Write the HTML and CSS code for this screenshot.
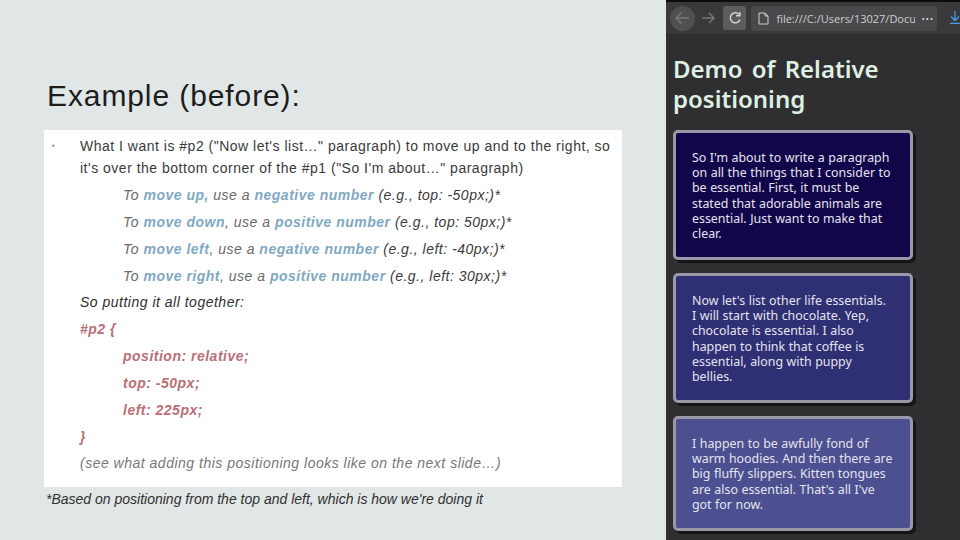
FILE: index.html
```html
<!DOCTYPE html>
<html lang="en">
<head>
<meta charset="utf-8">
<title>Example (before)</title>
<link rel="stylesheet" href="styles.css">
</head>
<body>
<main class="slide">
  <h1 class="title">Example (before):</h1>
  <section class="box">
    <div class="bullet-row">
      <span class="bullet">▪</span>
      <p class="lead">What I want is #p2 ("Now let's list…" paragraph) to move up and to the right, so it's over the bottom corner of the #p1 ("So I'm about…" paragraph)</p>
    </div>
    <div class="body">
      <p class="rule">To <b>move up,</b> use a <b>negative number</b> <span class="dark">(e.g., top: -50px;)*</span></p>
      <p class="rule">To <b>move down</b>, use a <b>positive number</b> <span class="dark">(e.g., top: 50px;)*</span></p>
      <p class="rule">To <b>move left</b>, use a <b>negative number</b> <span class="dark">(e.g., left: -40px;)*</span></p>
      <p class="rule">To <b>move right</b>, use a <b>positive number</b> <span class="dark">(e.g., left: 30px;)*</span></p>
      <p class="line plain">So putting it all together:</p>
      <p class="line code">#p2 {</p>
      <p class="rule code">position: relative;</p>
      <p class="rule code">top: -50px;</p>
      <p class="rule code">left: 225px;</p>
      <p class="line code">}</p>
      <p class="line see">(see what adding this positioning looks like on the next slide…)</p>
    </div>
  </section>
  <p class="foot">*Based on positioning from the top and left, which is how we're doing it</p>
</main>
<aside class="browser">
  <div class="tabstrip"></div>
  <div class="toolbar">
    <span class="nav back"><svg width="16" height="14" viewBox="0 0 16 14"><path d="M15 7H2M7.500 1.500 2 7l5.500 5.500" fill="none" stroke="#77777a" stroke-width="1.500"/></svg></span>
    <span class="nav fwd"><svg width="14" height="14" viewBox="0 0 14 14"><path d="M0 7h12M7 2l5 5-5 5" fill="none" stroke="#77777a" stroke-width="1.500"/></svg></span>
    <span class="nav reload"><svg width="14" height="14" viewBox="0 0 14 14"><path d="M12 8.500A5 5 0 1 1 11 3.500M11.800 1v3.800H8" fill="none" stroke="#d2d2d4" stroke-width="1.500"/></svg></span>
    <div class="url">
      <svg width="11" height="13" viewBox="0 0 11 13"><path d="M1 1h6l3 3v8H1zM7 1v3h3" fill="none" stroke="#cfcfd1" stroke-width="1"/></svg>
      <span class="url-text">file:///C:/Users/13027/Docu</span>
      <span class="dots">•••</span>
    </div>
    <svg class="download" width="10" height="14" viewBox="0 0 10 14"><path d="M5 0v9M1 5.500 5 9.500l4-4M0 12.500h10" fill="none" stroke="#4a9be8" stroke-width="1.300"/></svg>
  </div>
  <div class="page">
    <h2 class="demo">Demo of Relative positioning</h2>
    <p class="card c1">So I'm about to write a paragraph on all the things that I consider to be essential. First, it must be stated that adorable animals are essential. Just want to make that clear.</p>
    <p class="card c2">Now let's list other life essentials. I will start with chocolate. Yep, chocolate is essential. I also happen to think that coffee is essential, along with puppy bellies.</p>
    <p class="card c3">I happen to be awfully fond of warm hoodies. And then there are big fluffy slippers. Kitten tongues are also essential. That's all I've got for now.</p>
  </div>
</aside>
</body>
</html>
```
FILE: styles.css
```css
* { box-sizing: border-box; margin: 0; padding: 0; }
html, body { width: 960px; height: 540px; overflow: hidden; }
body { display: flex; background: #e1e7e7; font-family: "Liberation Sans", Arial, sans-serif; }
.slide { width: 666px; padding: 78px 44px 0 44px; }
.title { font-size: 30px; font-weight: 400; line-height: 36px; color: #1d1d1d; padding-left: 3px; letter-spacing: .9px; }
.box { width: 578px; height: 357px; margin-top: 16px; background: #fff; padding: 5px 10px 0 6px; font-size: 14px; letter-spacing: .5px; color: #333; }
.bullet-row { display: flex; }
.bullet { width: 30px; padding-left: 2px; font-size: 8px; line-height: 22px; color: #888; }
.lead { flex: 1; line-height: 22px; color: #3a3a3a; }
.body { padding-left: 30px; margin-top: 3px; font-style: italic; }
.body p { height: 26.850px; line-height: 26.850px; }
.rule { padding-left: 43px; color: #6a6a6a; }
.rule b { color: #7fa9c2; }
.dark { color: #3a3a3a; }
.plain { color: #303030; }
.code { color: #b96f76; font-weight: 700; }
.see { color: #777; }
.foot { padding: 4px 0 0 2px; font-size: 14px; font-style: italic; line-height: 16px; color: #303030; }
.browser { width: 294px; height: 540px; background: #2f2f31; display: flex; flex-direction: column; overflow: hidden; }
.tabstrip { flex: none; height: 2px; background: #0c0c0d; }
.toolbar { flex: none; height: 33px; background: #39393b; border-bottom: 1px solid #29292b; display: flex; align-items: center; padding-left: 4px; }
.nav { display: flex; align-items: center; justify-content: center; }
.back { width: 25px; height: 25px; border-radius: 50%; background: #505052; }
.fwd { width: 28px; height: 25px; }
.reload { width: 24px; height: 24px; border-radius: 2px; background: #5c5c5e; }
.url { width: 187px; height: 25px; margin-left: 5px; background: #49494b; border-radius: 2px; display: flex; align-items: center; padding-left: 7px; color: #cfcfd1; font-family: "Open Sans", sans-serif; font-size: 11px; overflow: hidden; white-space: nowrap; }
.url-text { width: 139px; margin-left: 7px; overflow: hidden; }
.dots { margin-left: 6px; font-size: 9px; letter-spacing: .8px; }
.download { margin-left: 13px; }
.page { flex: none; padding: 19px 0 0 7px; font-family: "Noto Sans", "DejaVu Sans", sans-serif; }
.demo { width: 240px; font-size: 24px; line-height: 30px; font-weight: 600; word-spacing: 3px; color: #dff0e3; margin-bottom: 16px; }
.card { width: 240px; border: 3px solid #9a98a6; border-radius: 5px; box-shadow: 3px 3px 0 #151517; padding: 17px 17px 0 16px; font-size: 12.400px; word-spacing: .3px; line-height: 15.200px; color: #e4e4ee; margin-bottom: 13px; }
.c1 { height: 130px; background: #12064a; }
.c2 { height: 130px; background: #2f2f74; }
.c3 { height: 115px; background: #4c4f90; }
```
